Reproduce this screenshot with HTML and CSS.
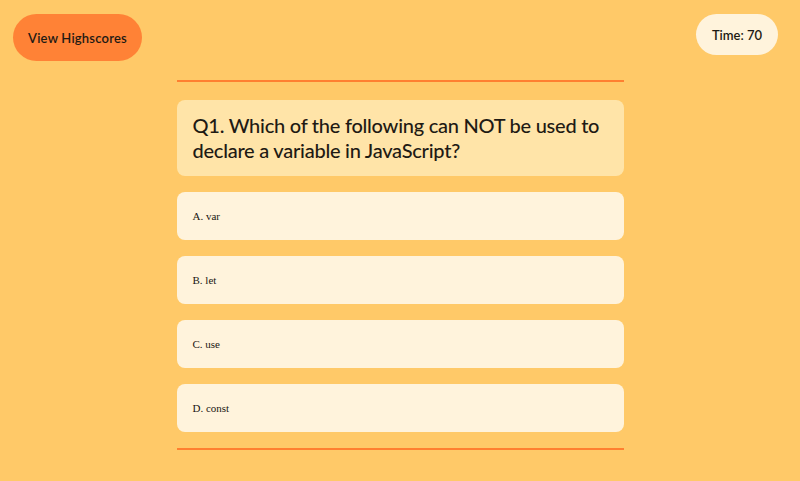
FILE: index.html
```html
<!DOCTYPE html>
<html>
<head>
<meta charset="utf-8">
<link rel="stylesheet" href="styles.css">
</head>
<body>
<header class="top">
  <button class="scores-btn">View Highscores</button>
  <div class="timer">Time: 70</div>
</header>
<main class="quiz">
  <hr class="rule">
  <div class="question">Q1. Which of the following can NOT be used to declare a variable in JavaScript?</div>
  <div class="options">
    <div class="option">A. var</div>
    <div class="option">B. let</div>
    <div class="option">C. use</div>
    <div class="option">D. const</div>
  </div>
  <hr class="rule">
</main>
</body>
</html>
```

FILE: styles.css
```css
html, body {
  margin: 0;
  padding: 0;
  background: #ffc968;
  height: 100%;
}
body {
  font-family: "Lato", "Noto Sans", sans-serif;
  color: #1e1a14;
}
.top {
  display: flex;
  justify-content: space-between;
  align-items: flex-start;
  padding: 14px 22px 0 13px;
}
.scores-btn {
  height: 47px;
  width: 129px;
  border: none;
  border-radius: 24px;
  background: #ff8236;
  font-family: "Lato", "Noto Sans", sans-serif;
  font-size: 13px;
  font-weight: 600;
  color: #1e1a14;
  padding: 0;
  letter-spacing: 0.2px;
}
.timer {
  height: 41px;
  width: 82px;
  border-radius: 21px;
  background: #fff3dc;
  display: flex;
  align-items: center;
  justify-content: center;
  font-size: 13px;
  font-weight: 600;
}
.quiz {
  width: 447px;
  margin: 19px auto 0;
  display: flex;
  flex-direction: column;
}
.rule {
  margin: 0;
  border: none;
  height: 2px;
  background: #ff7f30;
}
.question {
  margin: 18px 0 16px;
  background: #ffe4a8;
  border-radius: 8px;
  padding: 13px 16px;
  font-size: 20px;
  line-height: 25px;
  font-weight: 500;
  letter-spacing: -0.25px;
}
.options {
  display: flex;
  flex-direction: column;
  gap: 16px;
  margin-bottom: 16px;
}
.option {
  height: 48px;
  background: #fff3dc;
  border-radius: 8px;
  padding: 0 16px;
  display: flex;
  align-items: center;
  font-family: "Liberation Serif", serif;
  font-size: 11px;
  color: #1a1612;
}
```
